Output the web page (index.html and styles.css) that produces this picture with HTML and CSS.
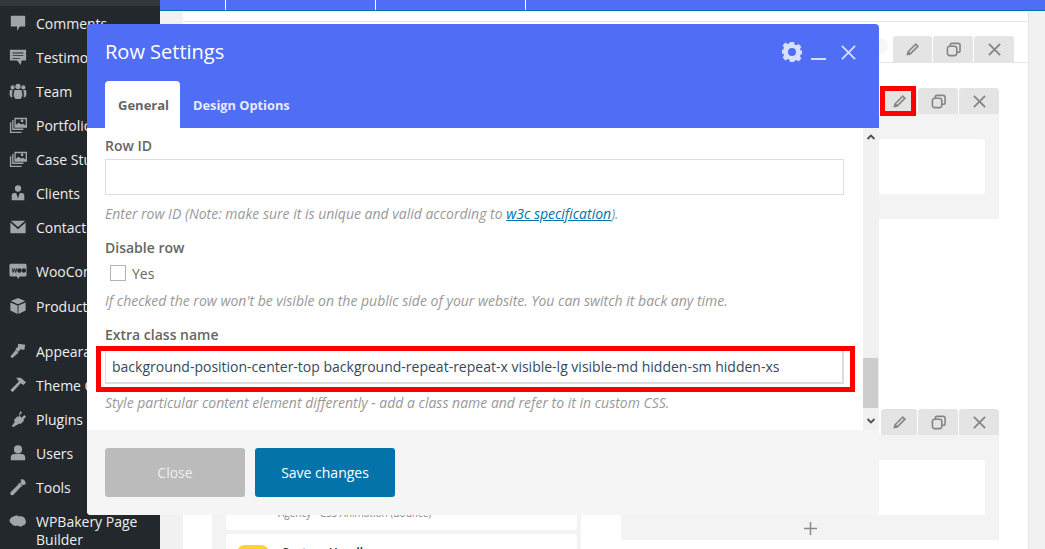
FILE: index.html
```html
<!DOCTYPE html>
<html lang="en">
<head>
<meta charset="utf-8">
<title>Row Settings</title>
<link rel="stylesheet" href="styles.css">
</head>
<body>
<div class="page">
  <aside class="sidebar">
    <div class="side-top"></div>
    <ul class="menu">
      <li><svg viewBox="0 0 20 20"><path d="M3 2h14a1 1 0 0 1 1 1v10a1 1 0 0 1-1 1h-5l-3 5v-5H3a1 1 0 0 1-1-1V3a1 1 0 0 1 1-1z"/></svg>Comments</li>
      <li><svg viewBox="0 0 20 20"><path fill-rule="evenodd" d="M1 2h18v12h-5l-1 5-4-5H1zM4 5v1h12V5zm0 3v1h12V8zm0 3v1h8v-1z"/></svg>Testimonials</li>
      <li><svg viewBox="0 0 20 20"><circle cx="10" cy="5" r="3"/><circle cx="4" cy="6" r="2.3"/><circle cx="16" cy="6" r="2.3"/><path d="M6 9h8l1 6-2 4H7l-2-4zM1 9h3l-.6 6 .6 2H2l-1.500-3zM16 9h3l.5 5-1.500 3h-2l.6-2z"/></svg>Team</li>
      <li><svg viewBox="0 0 20 20"><path fill-rule="evenodd" d="M6 2h14v11H6zm1.500 1.500V10l3-2.500 3 2 2-1 3 2V3.500zM14.500 4a1.500 1.500 0 1 1 0 3 1.500 1.500 0 0 1 0-3zM3.500 4.500H5V14h11v1.500H3.500zM1 7h1.500v10.500H14V19H1z"/></svg>Portfolio</li>
      <li><svg viewBox="0 0 20 20"><path fill-rule="evenodd" d="M6 2h14v11H6zm1.500 1.500V10l3-2.500 3 2 2-1 3 2V3.500zM14.500 4a1.500 1.500 0 1 1 0 3 1.500 1.500 0 0 1 0-3zM3.500 4.500H5V14h11v1.500H3.500zM1 7h1.500v10.500H14V19H1z"/></svg>Case Studies</li>
      <li><svg viewBox="0 0 20 20"><circle cx="10" cy="5" r="3.500"/><path d="M3 18v-5a3 3 0 0 1 3-3h2l2 6 2-6h2a3 3 0 0 1 3 3v5z"/></svg>Clients</li>
      <li><svg viewBox="0 0 20 20"><path d="M2 3h16L10 10zM1.500 5v11a1 1 0 0 0 1 1h15a1 1 0 0 0 1-1V5L10 12.500z"/></svg>Contact</li>
      <li class="sep-a"><svg viewBox="0 0 20 20"><path fill-rule="evenodd" d="M2 2h16a1.500 1.500 0 0 1 1.500 1.500v11A1.500 1.500 0 0 1 18 16h-6l-2 3-1-3H2A1.500 1.500 0 0 1 .5 14.500v-11A1.500 1.500 0 0 1 2 2zm1 5l1 5h1l1-3 1 3h1l1-5H8l-.5 3-1-3h-1l-1 3L4 7zm8.500 0a2.500 2.500 0 1 0 0 5 2.500 2.500 0 0 0 0-5zm5 0a2.500 2.500 0 1 0 0 5 2.500 2.500 0 0 0 0-5z"/></svg>WooCommerce</li>
      <li class="after-woo"><svg viewBox="0 0 20 20"><path d="M10 1l8 3.500-8 3.500-8-3.500zM1.500 6l8 3.500V19l-8-4zM18.500 6v9l-8 4V9.500z"/></svg>Products</li>
      <li class="sep-b"><svg viewBox="0 0 20 20"><path d="M10 2l8 1-1 6-4-1-3 3-3-3 3-3zM7.500 9l3 3-7 6-2-2z"/></svg>Appearance</li>
      <li><svg viewBox="0 0 20 20"><path d="M8 2h5l6 5-3 3-3-2-9 10-2.500-2.500L11 6z"/></svg>Theme Check</li>
      <li><svg viewBox="0 0 20 20"><path d="M12.500 1l2 2-3 3 2.500 2.500 3-3 2 2-3 3 1 1-4 4-1.500-.5L5 19l-2-1 3.500-5-1-2 4-4 1 1z"/></svg>Plugins<span class="badge"></span></li>
      <li><svg viewBox="0 0 20 20"><circle cx="10" cy="6" r="4.500"/><path d="M2 18v-3a4 4 0 0 1 4-4h8a4 4 0 0 1 4 4v3z"/></svg>Users</li>
      <li><svg viewBox="0 0 20 20"><path d="M14 1.500a4.500 4.500 0 0 1 4.500 5.500L15.500 8 12.500 6.500 13.500 3l-1-1zM11 5l4 4-2 1-8 8.500a2 2 0 0 1-3-3L10.500 7z"/></svg>Tools</li>
      <li class="two-line"><svg viewBox="0 0 20 20"><path d="M5 4c3-2 5-1 6 0 3-1 6 0 7 3 2 3 0 7-3 7-1 2-4 1-5 0-3 1-6 0-7-2-3-1-4-6 2-8z"/></svg>WPBakery Page Builder</li>
    </ul>
  </aside>

  <main class="main">
    <div class="topbar"><span class="seg seg-a"></span><span class="seg seg-b"></span><span class="seg seg-b"></span><span class="seg"></span></div>
    <div class="wrap">
      <div class="panel">
        <div class="panel-head"></div>
        <div class="outer-tabs">
          <span class="ghost-dot"></span>
          <div class="tabs">
            <span class="tab w39"><svg class="ic" viewBox="0 0 16 16"><path fill-rule="evenodd" d="M11.500 1l3.500 3.500-9 9-4.500 1 1-4.500zM11.500 3.500l-7 7 1 1 7-7z"/></svg></span>
            <span class="tab w40"><svg class="ic" viewBox="0 0 16 16"><g class="line"><rect x="1.500" y="4.500" width="10" height="10" rx="2.500"/><path d="M4.500 4.500V3.500a2 2 0 0 1 2-2h6.500a2 2 0 0 1 2 2V9a2 2 0 0 1-2 2h-1.500"/></g></svg></span>
            <span class="tab w40"><svg class="ic" viewBox="0 0 16 16"><path class="line" d="M2 2l12 12M14 2L2 14"/></svg></span>
          </div>
        </div>
        <div class="cols">
          <div class="col-left">
            <div class="card tall"><span class="card-sub">Agency - CSS Animation (Bounce)</span></div>
            <div class="card next"><span class="yellow"></span><span class="card-title">Custom Handle</span></div>
          </div>
          <div class="col-right">
            <section class="row-block">
              <div class="tabs">
                <span class="tab w36"><svg class="ic" viewBox="0 0 16 16"><path fill-rule="evenodd" d="M11.500 1l3.500 3.500-9 9-4.500 1 1-4.500zM11.500 3.500l-7 7 1 1 7-7z"/></svg></span>
                <span class="tab w40"><svg class="ic" viewBox="0 0 16 16"><g class="line"><rect x="1.500" y="4.500" width="10" height="10" rx="2.500"/><path d="M4.500 4.500V3.500a2 2 0 0 1 2-2h6.500a2 2 0 0 1 2 2V9a2 2 0 0 1-2 2h-1.500"/></g></svg></span>
                <span class="tab w40"><svg class="ic" viewBox="0 0 16 16"><path class="line" d="M2 2l12 12M14 2L2 14"/></svg></span>
              </div>
              <div class="row-body"><div class="row-card"></div></div>
            </section>
            <section class="row-block second">
              <div class="tabs">
                <span class="tab w36"><svg class="ic" viewBox="0 0 16 16"><path fill-rule="evenodd" d="M11.500 1l3.500 3.500-9 9-4.500 1 1-4.500zM11.500 3.500l-7 7 1 1 7-7z"/></svg></span>
                <span class="tab w40"><svg class="ic" viewBox="0 0 16 16"><g class="line"><rect x="1.500" y="4.500" width="10" height="10" rx="2.500"/><path d="M4.500 4.500V3.500a2 2 0 0 1 2-2h6.500a2 2 0 0 1 2 2V9a2 2 0 0 1-2 2h-1.500"/></g></svg></span>
                <span class="tab w40"><svg class="ic" viewBox="0 0 16 16"><path class="line" d="M2 2l12 12M14 2L2 14"/></svg></span>
              </div>
              <div class="row-body"><div class="row-card"></div><svg class="plus" viewBox="0 0 16 16"><path d="M8 1v14M1 8h14"/></svg></div>
            </section>
          </div>
        </div>
      </div>
    </div>
  </main>

  <span class="red-mark"></span>

  <div class="modal">
    <header class="modal-head">
      <div class="modal-title-row">
        <h1 class="modal-title">Row Settings</h1>
        <div class="modal-actions">
          <svg class="gear" viewBox="0 0 20 20"><path fill-rule="evenodd" d="M8 0h4l.6 2.600 1.700.7 2.300-1.400 2.800 2.800-1.400 2.300.7 1.700L20 8v4l-1.300.6-.7 1.700 1.400 2.300-2.800 2.800-2.300-1.400-1.700.7L12 20H8l-.6-2.300-1.700-.7-2.300 1.400-2.800-2.800 1.400-2.300-.7-1.700L0 12V8l1.300-.6.700-1.700L.6 3.400 3.400.6l2.300 1.400 1.700-.7zM10 6a4 4 0 1 0 0 8 4 4 0 0 0 0-8z"/></svg>
          <span class="minimize"></span>
          <svg class="close-x" viewBox="0 0 16 16"><path d="M1 1l14 14M15 1L1 15"/></svg>
        </div>
      </div>
      <nav class="modal-tabs">
        <span class="mtab active">General</span>
        <span class="mtab">Design Options</span>
      </nav>
    </header>
    <div class="modal-body">
      <div class="form">
        <label class="flabel first">Row ID</label>
        <div class="finput tall-input"></div>
        <p class="help">Enter row ID (Note: make sure it is unique and valid according to <a class="speclink">w3c specification</a>).</p>
        <label class="flabel">Disable row</label>
        <div class="check-row"><span class="checkbox"></span><span>Yes</span></div>
        <p class="help tight">If checked the row won't be visible on the public side of your website. You can switch it back any time.</p>
        <label class="flabel">Extra class name</label>
        <div class="finput filled">background-position-center-top background-repeat-repeat-x visible-lg visible-md hidden-sm hidden-xs</div>
        <p class="help">Style particular content element differently - add a class name and refer to it in custom CSS.</p>
      </div>
      <div class="scrollbar">
        <svg class="arrow" viewBox="0 0 10 8"><path d="M1.500 6L5 2.500 8.500 6"/></svg>
        <span class="thumb"></span>
        <svg class="arrow" viewBox="0 0 10 8"><path d="M1.500 2L5 5.500 8.500 2"/></svg>
      </div>
      <span class="red-field"></span>
    </div>
    <footer class="modal-foot">
      <span class="btn btn-close">Close</span>
      <span class="btn btn-save">Save changes</span>
    </footer>
  </div>
</div>
</body>
</html>
```
FILE: styles.css
```css
* { box-sizing: border-box; }
html, body { margin: 0; height: 100%; overflow: hidden; }
body { font-family: "Open Sans", "Liberation Sans", sans-serif; font-size: 14px; background: #f1f1f1; }
.page { position: relative; display: flex; width: 1045px; height: 549px; overflow: hidden; }

/* sidebar */
.sidebar { width: 160px; flex: none; background: #23282d; color: #eee; }
.side-top { height: 6px; background: #32373c; margin-bottom: 1px; }
.menu { list-style: none; margin: 0; padding: 0; }
.menu li { position: relative; height: 34px; padding-left: 36px; line-height: 34px; white-space: nowrap; }
.menu li svg { position: absolute; left: 9px; top: 7px; width: 18px; height: 18px; fill: #a0a5aa; }
.menu li.sep-a { margin-top: 10px; }
.menu li.after-woo { margin-top: 1px; }
.menu li.sep-b { margin-top: 11px; }
.menu li.two-line { white-space: normal; line-height: 18px; height: 44px; padding-top: 8px; padding-right: 10px; }
.menu li.two-line svg { top: 8px; }
.badge { display: inline-block; width: 10px; height: 17px; margin-left: 6px; border-radius: 9px; background: #d54e21; vertical-align: middle; }

/* main page below the dialog */
.main { flex: 1; min-width: 0; display: flex; flex-direction: column; }
.topbar { display: flex; flex: none; height: 11px; background: #4f6df5; border-bottom: 1px solid #0073aa; }
.seg { height: 10px; border-right: 1px solid #fff; }
.seg-a { width: 66px; }
.seg-b { width: 150px; }
.seg:last-child { flex: 1; border-right: 0; }
.wrap { flex: 1; padding: 0 16px 0 23px; min-height: 0; }
.panel { height: 100%; background: #fff; border-right: 1px solid #e5e5e5; }
.panel-head { height: 11px; border-bottom: 1px solid #e5e5e5; }
.outer-tabs { display: flex; justify-content: flex-end; align-items: flex-end; gap: 0; height: 41px; padding-right: 14px; border-bottom: 1px solid #e5e5e5; }
.ghost-dot { width: 16px; height: 16px; margin: 0 5px 8px 0; border-radius: 50%; background: #f6f7f8; }
.tabs { display: flex; gap: 1px; justify-content: flex-end; height: 26px; }
.tab { display: flex; align-items: center; justify-content: center; height: 26px; background: #e4e4e4; border-radius: 3px 3px 0 0; }
.w36 { width: 36px; }
.w39 { width: 39px; }
.w40 { width: 40px; }
.ic { width: 15px; height: 15px; fill: #858585; }
.ic .line { fill: none; stroke: #858585; stroke-width: 1.700; }
.ic path.line { stroke-width: 1.900; }

.cols { display: flex; align-items: flex-start; padding-left: 29px; gap: 40px; }
.col-left { width: 369px; margin-top: 26px; padding: 14px 4px 0 14px; background: #f3f3f3; display: flex; flex-direction: column; gap: 4px; }
.card { background: #fff; border-radius: 3px; display: flex; }
.tall { height: 427px; align-items: flex-end; padding: 0 0 11px 52px; }
.next { height: 40px; padding: 11px 0 0 11px; gap: 12px; }
.card-sub { font-size: 10px; color: #888; line-height: 12px; }
.yellow { width: 32px; height: 32px; border-radius: 8px; background: #ffd22e; }
.card-title { font-size: 12px; font-weight: 600; color: #333; line-height: 12px; margin-top: 2px; }
.col-right { width: 378px; margin-top: 25px; }
.row-block.second { margin-top: 190px; }
.row-body { position: relative; height: 105px; padding: 25px 14px 0; background: #f3f3f3; }
.row-card { height: 55px; background: #fff; border-radius: 3px; }
.plus { display: block; width: 15px; height: 15px; margin: 6px auto 0; fill: none; stroke: #8a8a8a; stroke-width: 1.600; }

/* red marks over the screenshot */
.red-mark { position: absolute; left: 880px; top: 86px; width: 36px; height: 30px; border: 5px solid #f00; }

/* dialog */
.modal { position: absolute; left: 87px; top: 24px; width: 792px; height: 491px; display: flex; flex-direction: column; border-radius: 4px; overflow: hidden; background: #fff; }
.modal-head { flex: none; height: 104px; background: #4f6df5; color: #fff; display: flex; flex-direction: column; justify-content: space-between; }
.modal-title-row { display: flex; justify-content: space-between; align-items: center; padding: 14px 23px 0 18px; }
.modal-title { margin: 0; font-size: 20px; font-weight: 400; line-height: 28px; }
.modal-actions { display: flex; align-items: center; }
.gear { width: 20px; height: 20px; fill: #d6e0ff; margin-right: 9px; }
.minimize { width: 15px; height: 2px; background: #d6e0ff; margin: 14px 15px 0 0; }
.close-x { width: 15px; height: 15px; fill: none; stroke: #d6e0ff; stroke-width: 2; }
.modal-tabs { display: flex; align-items: flex-end; padding-left: 18px; gap: 0; }
.mtab { height: 47px; padding: 0 13px; line-height: 48px; font-size: 12.800px; font-weight: 700; color: #e6ebff; }
.mtab.active { width: 75px; text-align: center; background: #fff; color: #666; border-radius: 4px 4px 0 0; font-size: 13px; }

.modal-body { position: relative; flex: 1; min-height: 0; display: flex; background: #fff; }
.form { flex: 1; min-width: 0; padding: 8px 19px 0 18px; }
.flabel { display: block; margin-top: 14px; font-size: 14px; line-height: 20px; font-weight: 600; color: #666; }
.flabel.first { margin-top: 0; }
.finput { margin-top: 5px; height: 34px; border: 1px solid #ddd; border-width: 1px 2px 2px 1px; padding-left: 6px; font-size: 14px; line-height: 32px; color: #34495e; white-space: nowrap; }
.tall-input { margin-top: 3px; height: 36px; border-width: 1px; }
.help { margin: 9px 0 0; font-size: 14px; line-height: 20px; font-style: italic; color: #999; white-space: nowrap; }
.help.tight { margin-top: 8px; }
.speclink { color: #0073aa; text-decoration: underline; }
.check-row { display: flex; align-items: center; gap: 6px; height: 20px; margin-top: 5px; padding-left: 5px; color: #666; font-size: 14px; line-height: 19px; }
.checkbox { width: 16px; height: 16px; border: 1px solid #b4b4b4; background: #fff; }
.scrollbar { flex: none; width: 16px; display: flex; flex-direction: column; align-items: stretch; background: #f1f1f1; }
.arrow { flex: none; width: 10px; height: 8px; margin: 5px auto; fill: none; stroke: #505050; stroke-width: 1.800; }
.thumb { width: 15px; height: 55px; margin-top: 212px; margin-bottom: 4px; background: #cdcdcd; }
.red-field { position: absolute; left: 9px; top: 218px; width: 759px; height: 46px; border: 5px solid #f00; }

.modal-foot { flex: none; height: 85px; display: flex; gap: 10px; padding: 18px 18px 0; background: #f5f5f5; }
.btn { width: 140px; height: 49px; border-radius: 3px; text-align: center; line-height: 50px; font-size: 14px; }
.btn-close { background: #bbb; color: #eee; }
.btn-save { background: #0473aa; color: #fff; }
```
